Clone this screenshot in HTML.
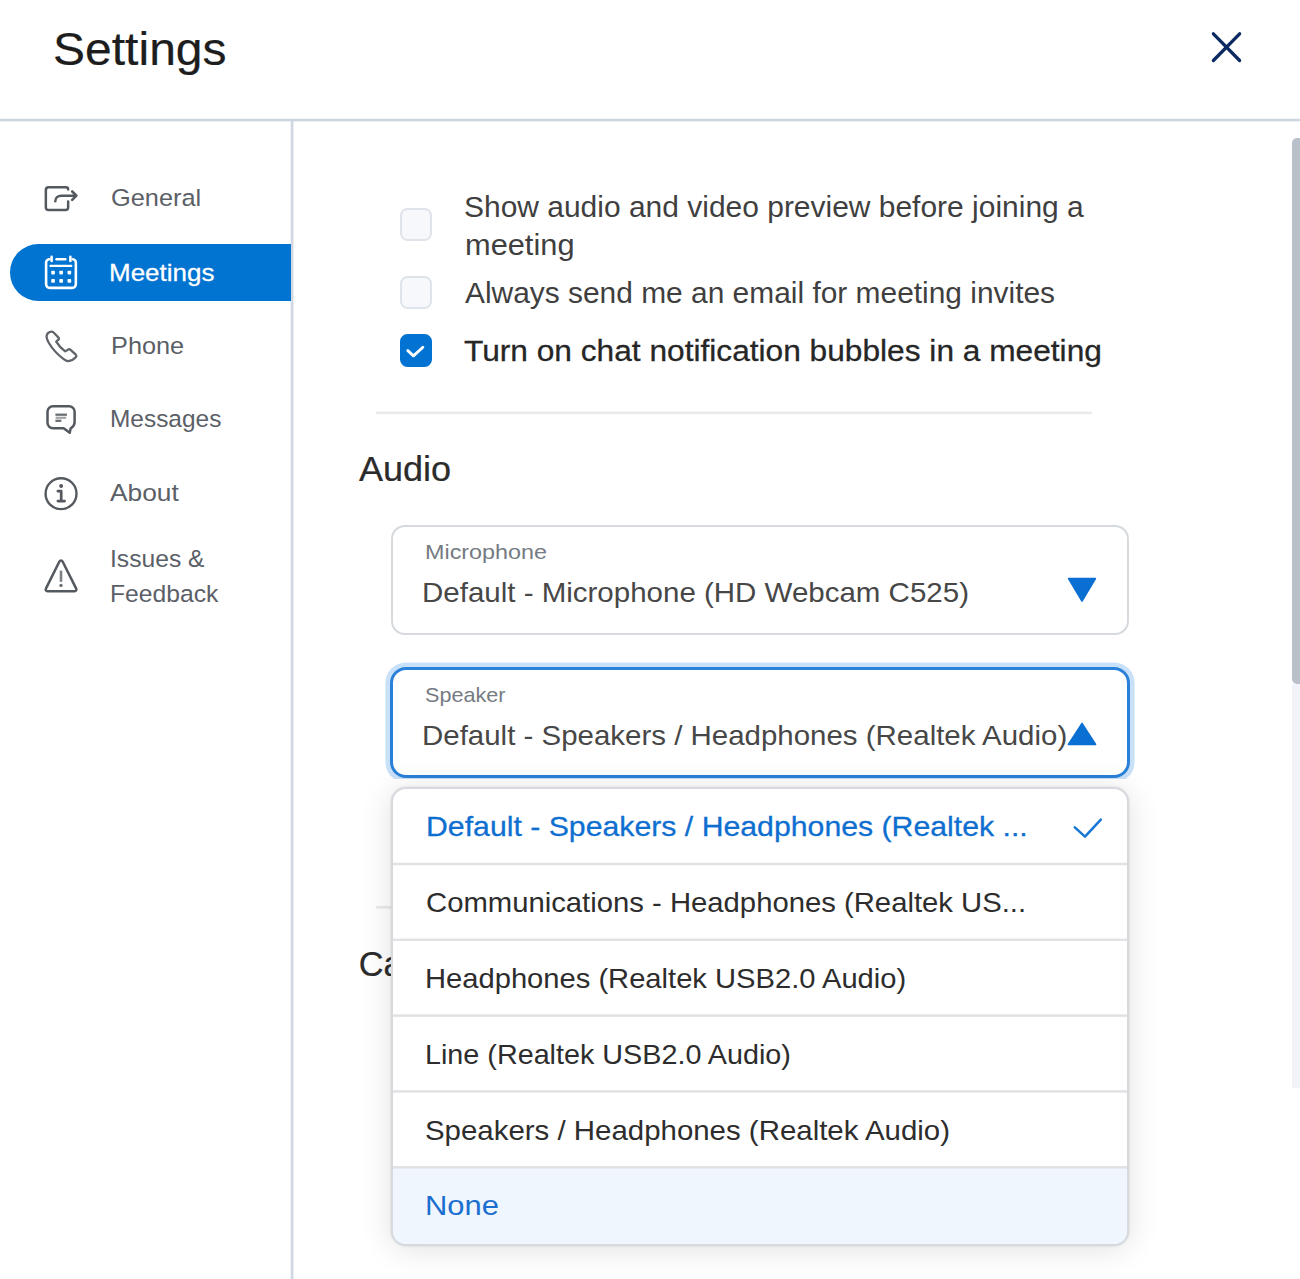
<!DOCTYPE html>
<html>
<head>
<meta charset="utf-8">
<title>Settings</title>
<style>
*{box-sizing:border-box;margin:0;padding:0}
html,body{width:1300px;height:1279px;overflow:hidden;background:#fff}
body{font-family:"Liberation Sans",sans-serif;color:#333;position:relative}
.abs{position:absolute}
.t{position:absolute;white-space:nowrap;line-height:1;transform-origin:0 0}
svg{position:absolute;overflow:visible}
#hdr{left:0;top:118px;width:1300px;height:4px;background:linear-gradient(to bottom,rgba(205,213,225,0) 0,rgba(205,213,225,.45) 22%,#cdd5e1 38%,#cdd5e1 68%,rgba(205,213,225,.45) 84%,rgba(205,213,225,0) 100%)}
#side{left:290px;top:121px;width:4px;height:1158px;background:linear-gradient(to right,rgba(207,214,226,0) 0,rgba(207,214,226,.5) 20%,#cfd6e2 40%,#cfd6e2 70%,rgba(207,214,226,.5) 85%,rgba(207,214,226,0) 100%)}
#pill{left:10px;top:243.6px;width:281.4px;height:57.8px;background:#0173d1;border-radius:29px 0 0 29px}
.cb{width:32.4px;height:32.7px;border:2px solid #dfe3ea;border-radius:7.5px;background:#f7f8fb;left:399.6px}
.cbon{background:#0273d3;border-color:#0273d3}
.hr{height:2px;background:#e9e9e9}
.box{border:2px solid #d6dadf;border-radius:14px;background:#fff}
#dd{left:391px;top:787px;width:738px;height:459px;border:2px solid #d6d9de;border-radius:15px;background:#fff;overflow:hidden;box-shadow:0 3px 32px rgba(0,0,0,.12),0 0 2.5px rgba(0,0,0,.13)}
.dv{position:absolute;left:0;width:100%;height:2px;background:#e2e3e5;box-shadow:0 0 0 .5px rgba(226,227,229,.5)}
</style>
</head>
<body>
<div id="hdr" class="abs"></div>
<svg style="left:1209px;top:30px" width="36" height="36" viewBox="0 0 36 36"><path d="M4.4 3.8L30.6 30.5M30.6 3.8L4.4 30.5" stroke="#0b2a62" stroke-width="3.3" stroke-linecap="round" fill="none"/></svg>

<div id="side" class="abs"></div>
<div id="pill" class="abs"></div>

<!-- General icon -->
<svg style="left:44px;top:185px" width="36" height="28" viewBox="0 0 36 28" fill="none" stroke="#54585f" stroke-width="2.5" stroke-linecap="round" stroke-linejoin="round">
<path d="M24.15 4.4A2.1 2.1 0 0 0 22.05 2.35H4.65A2.8 2.8 0 0 0 1.85 5.15V22.3A2.8 2.8 0 0 0 4.65 25.1H21.35A2.8 2.8 0 0 0 24.15 22.3V16.6"/>
<path d="M11.3 16.3C11.3 13 13.9 10.7 17.4 10.7H31.8"/>
<path d="M28.2 6.5L32.4 10.7L28.2 14.9" stroke-width="2.6"/>
</svg>
<!-- Meetings icon -->
<svg style="left:44px;top:255px" width="36" height="36" viewBox="0 0 36 36" fill="none" stroke="#fff" stroke-width="2.6" stroke-linecap="round" stroke-linejoin="round">
<path d="M5.2 4.3A3.2 3.2 0 0 0 2.1 7.6V29.35A3.5 3.5 0 0 0 5.6 32.85H28.35A3.5 3.5 0 0 0 31.85 29.35V7.6A3.2 3.2 0 0 0 28.8 4.3"/>
<path d="M7.6 1.9V5.9M26.4 1.9V5.9"/>
<path d="M12.6 4.3H21.3"/>
<path d="M6.4 10.9H27.4" stroke-width="2.1"/>
<g fill="#fff" stroke="none"><rect x="7.2" y="15.7" width="3.7" height="3.7" rx=".8"/><rect x="15.3" y="15.7" width="3.7" height="3.7" rx=".8"/><rect x="23.5" y="15.7" width="3.7" height="3.7" rx=".8"/><rect x="7.2" y="24" width="3.7" height="3.7" rx=".8"/><rect x="15.3" y="24" width="3.7" height="3.7" rx=".8"/><rect x="23.5" y="24" width="3.7" height="3.7" rx=".8"/></g>
</svg>
<!-- Phone icon -->
<svg style="left:44px;top:329px" width="36" height="36" viewBox="0 0 36 36" fill="none" stroke="#61656b" stroke-width="2.3" stroke-linecap="round" stroke-linejoin="round">
<path d="M7.2 2.6C8.2 2.4 9 2.9 9.6 3.5L14.3 8.4C15.1 9.2 15.2 10 14.5 10.7L12.2 12.6C14.5 16.5 17.5 19.6 21.2 22.4L23.8 20.7C24.8 20 25.8 20.1 26.6 20.8L31.8 25.7C32.6 26.5 32.7 27.3 32 28.1C30.3 30 27.5 32 24.3 32.2C22.5 32.3 21 31.2 19.7 30.2C13.5 25.5 8.5 20 5.2 14.5C3.7 12 2.4 9.5 2.6 7.2C2.8 5.2 4.5 3 7.2 2.6Z"/>
</svg>
<!-- Messages icon -->
<svg style="left:44px;top:403px" width="36" height="36" viewBox="0 0 36 36" fill="none" stroke="#54585f" stroke-width="2.5" stroke-linecap="round" stroke-linejoin="round">
<path d="M9 3.3H25.1A5.5 5.5 0 0 1 30.6 8.8V19.4C30.6 22.6 28.6 24 26.6 25.6L25.7 29.8L19.7 25.2H9A5.5 5.5 0 0 1 3.5 19.7V8.8A5.5 5.5 0 0 1 9 3.3Z"/>
<path d="M11.4 11.7H22.9" stroke-width="2.3" stroke="#6b6f75" stroke-linecap="butt"/><path d="M11.6 14.8H22.2" stroke-width="2.2" stroke="#a3a6aa" stroke-linecap="butt"/><path d="M11.4 17.8H17.3" stroke-width="2.3" stroke="#6b6f75" stroke-linecap="butt"/>
</svg>
<!-- About icon -->
<svg style="left:44px;top:476px" width="36" height="36" viewBox="0 0 36 36" fill="none" stroke="#54585f" stroke-width="2.4" stroke-linecap="round" stroke-linejoin="round">
<circle cx="17.05" cy="17.7" r="15.45"/>
<path d="M13.9 15.2H17.2V25M13.9 25.1H20.6" stroke-width="2.7"/>
<circle cx="17.15" cy="10" r="2" fill="#54585f" stroke="none"/>
</svg>
<!-- Issues icon -->
<svg style="left:44px;top:558px" width="36" height="36" viewBox="0 0 36 36" fill="none" stroke="#54585f" stroke-width="2.5" stroke-linecap="round" stroke-linejoin="round">
<path d="M15.4 3.45a1.8 1.8 0 0 1 3.2 0L32.2 30.6a1.8 1.8 0 0 1-1.6 2.65H3.5a1.8 1.8 0 0 1-1.6-2.65Z"/>
<path d="M17 12.6V23.8" stroke="#7d8186" stroke-width="2.6" stroke-linecap="butt"/><circle cx="17" cy="27.4" r="1.7" fill="#6b6f75" stroke="none"/>
</svg>

<div class="abs cb" style="top:208.4px"></div>
<div class="abs cb" style="top:276.4px"></div>
<div class="abs cb cbon" style="top:333.8px;height:33.5px"></div>
<svg style="left:399px;top:334px" width="34" height="34" viewBox="0 0 34 34" fill="none" stroke="#fff" stroke-width="2.8" stroke-linecap="round" stroke-linejoin="round"><path d="M8.8 16.6L14.5 21.9L23.9 13.2"/></svg>

<div class="abs" style="left:376px;top:409px;width:716px;height:6px;background:linear-gradient(to bottom,rgba(234,234,234,0) 2.15px,rgba(234,234,234,1) 3.05px,rgba(234,234,234,1) 4.75px,rgba(234,234,234,0) 5.65px)"></div>

<div class="abs box" style="left:391px;top:524.8px;width:738px;height:110px"></div>
<svg style="left:1066px;top:577px" width="32" height="26" viewBox="0 0 32 26"><path d="M2.6 1.6H29.4L16 24Z" fill="#0a6fd2" stroke="#0a6fd2" stroke-width="1.6" stroke-linejoin="round"/></svg>

<div class="abs box" style="left:390px;top:667px;width:740px;height:111px;border:3px solid #2a81d9;border-radius:16px;box-shadow:0 0 0 4.6px #c9e1f8"></div>
<svg style="left:1066px;top:721px" width="32" height="26" viewBox="0 0 32 26"><path d="M16 2.4L29.6 23.4H2.4Z" fill="#0a6fd2" stroke="#0a6fd2" stroke-width="1.6" stroke-linejoin="round"/></svg>

<div class="abs" style="left:376px;top:904px;width:64px;height:6px;background:linear-gradient(to bottom,rgba(234,234,234,0) 1.55px,rgba(234,234,234,1) 2.45px,rgba(234,234,234,1) 4.15px,rgba(234,234,234,0) 5.05px)"></div>

<div class="t" id="title" style="left:52.65px;top:26.00px;font-size:46.8px;color:#1d1d1d;transform:scaleX(1.0268);-webkit-text-stroke:0.22px #1d1d1d">Settings</div>
<div class="t" id="n1" style="left:110.60px;top:186.00px;font-size:24.5px;color:#5b6067;transform:scaleX(1.0345)">General</div>
<div class="t" id="n2" style="left:108.80px;top:261.00px;font-size:24.5px;color:#ffffff;transform:scaleX(1.0605);-webkit-text-stroke:0.28px #ffffff">Meetings</div>
<div class="t" id="n3" style="left:110.55px;top:334.00px;font-size:24.5px;color:#5b6067;transform:scaleX(1.0332)">Phone</div>
<div class="t" id="n4" style="left:110.00px;top:407.00px;font-size:24.5px;color:#5b6067;transform:scaleX(0.9972)">Messages</div>
<div class="t" id="n5" style="left:110.20px;top:481.00px;font-size:24.5px;color:#5b6067;transform:scaleX(1.0752)">About</div>
<div class="t" id="n6" style="left:109.80px;top:547.00px;font-size:24.5px;color:#5b6067;transform:scaleX(1.0057)">Issues &amp;</div>
<div class="t" id="n7" style="left:110.00px;top:582.00px;font-size:24.5px;color:#5b6067;transform:scaleX(1.0071)">Feedback</div>
<div class="t" id="o1" style="left:464.00px;top:193.00px;font-size:29px;color:#3f3f3f;transform:scaleX(1.0333)">Show audio and video preview before joining a</div>
<div class="t" id="o1b" style="left:465.00px;top:231.00px;font-size:29px;color:#3f3f3f;transform:scaleX(1.0613)">meeting</div>
<div class="t" id="o2" style="left:465.00px;top:279.00px;font-size:29px;color:#3f3f3f;transform:scaleX(1.0312)">Always send me an email for meeting invites</div>
<div class="t" id="o3" style="left:463.75px;top:337.00px;font-size:29px;color:#262626;transform:scaleX(1.0920);-webkit-text-stroke:0.28px #262626">Turn on chat notification bubbles in a meeting</div>
<div class="t" id="h1" style="left:359.00px;top:452.00px;font-size:34.3px;color:#2b2b2b;transform:scaleX(1.0504);-webkit-text-stroke:0.22px #2b2b2b">Audio</div>
<div class="t" id="l1" style="left:425.00px;top:541.00px;font-size:21px;color:#757b83;transform:scaleX(1.1125)">Microphone</div>
<div class="t" id="v1" style="left:421.80px;top:579.00px;font-size:28px;color:#474747;transform:scaleX(1.0534)">Default - Microphone (HD Webcam C525)</div>
<div class="t" id="l2" style="left:425.40px;top:684.00px;font-size:21px;color:#757b83;transform:scaleX(1.0291)">Speaker</div>
<div class="t" id="v2" style="left:421.80px;top:722.00px;font-size:28px;color:#474747;transform:scaleX(1.0521)">Default - Speakers / Headphones (Realtek Audio)</div>
<div class="t" id="h2" style="left:358.65px;top:947.00px;font-size:34.3px;color:#2b2b2b;transform:scaleX(1.0000);-webkit-text-stroke:0.22px #2b2b2b">Camera</div>

<div class="abs" style="left:380px;top:778.6px;width:760px;height:14px;background:#fff"></div>
<div id="dd" class="abs">
 <div class="abs" style="left:0;top:379px;width:100%;height:82px;background:#f0f6fe"></div>
</div>
<div class="abs" style="left:393px;top:861px;width:734px;height:6px;background:linear-gradient(to bottom,rgba(226,226,228,0) 1.30px,rgba(226,226,228,1) 2.20px,rgba(226,226,228,1) 3.80px,rgba(226,226,228,0) 4.70px)"></div>
<div class="abs" style="left:393px;top:936px;width:734px;height:6px;background:linear-gradient(to bottom,rgba(226,226,228,0) 2.10px,rgba(226,226,228,1) 3.00px,rgba(226,226,228,1) 4.60px,rgba(226,226,228,0) 5.50px)"></div>
<div class="abs" style="left:393px;top:1012px;width:734px;height:6px;background:linear-gradient(to bottom,rgba(226,226,228,0) 1.90px,rgba(226,226,228,1) 2.80px,rgba(226,226,228,1) 4.40px,rgba(226,226,228,0) 5.30px)"></div>
<div class="abs" style="left:393px;top:1088px;width:734px;height:6px;background:linear-gradient(to bottom,rgba(226,226,228,0) 1.70px,rgba(226,226,228,1) 2.60px,rgba(226,226,228,1) 4.20px,rgba(226,226,228,0) 5.10px)"></div>
<div class="abs" style="left:393px;top:1164px;width:734px;height:6px;background:linear-gradient(to bottom,rgba(226,226,228,0) 1.60px,rgba(226,226,228,1) 2.50px,rgba(226,226,228,1) 4.10px,rgba(226,226,228,0) 5.00px)"></div>
<svg style="left:1070px;top:815px" width="36" height="26" viewBox="0 0 36 26" fill="none" stroke="#1676d6" stroke-width="2.5" stroke-linecap="round" stroke-linejoin="round"><path d="M4.8 12.4L15 21.6L30.8 4.6"/></svg>
<div class="t" id="d1" style="left:425.50px;top:813.00px;font-size:28px;color:#0f6fd0;transform:scaleX(1.0800);-webkit-text-stroke:0.28px #0f6fd0">Default - Speakers / Headphones (Realtek ...</div>
<div class="t" id="d2" style="left:426.00px;top:889.00px;font-size:28px;color:#2d2d2d;transform:scaleX(1.0450)">Communications - Headphones (Realtek US...</div>
<div class="t" id="d3" style="left:425.20px;top:965.00px;font-size:28px;color:#2d2d2d;transform:scaleX(1.0409)">Headphones (Realtek USB2.0 Audio)</div>
<div class="t" id="d4" style="left:424.95px;top:1041.00px;font-size:28px;color:#2d2d2d;transform:scaleX(1.0265)">Line (Realtek USB2.0 Audio)</div>
<div class="t" id="d5" style="left:425.20px;top:1117.00px;font-size:28px;color:#2d2d2d;transform:scaleX(1.0508)">Speakers / Headphones (Realtek Audio)</div>
<div class="t" id="d6" style="left:424.80px;top:1192.00px;font-size:28px;color:#1a6fd0;transform:scaleX(1.1042)">None</div>

<div class="abs" style="left:1292px;top:684px;width:8px;height:404px;background:#f1f3f8"></div>
<div class="abs" style="left:1291.6px;top:137.6px;width:14px;height:546.6px;background:#bac0c9;border-radius:5px"></div>
</body>
</html>
